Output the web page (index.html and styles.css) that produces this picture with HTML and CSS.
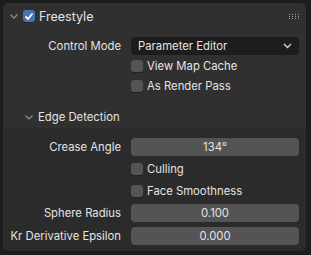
FILE: index.html
```html
<!DOCTYPE html>
<html lang="en">
<head>
    <meta charset="UTF-8">
    <title>Freestyle</title>
    <link rel="stylesheet" href="styles.css">
</head>
<body>
<div class="panel">
  <div class="panel-head">
    <svg class="chev" width="8" height="5" viewBox="0 0 8 5"><path d="M0.5 0.5 L4 4 L7.5 0.5" fill="none" stroke="#8a8a8a" stroke-width="1.3"/></svg>
    <span class="check on"><svg width="10" height="9" viewBox="0 0 10 9"><path d="M1.5 4.5 L4 7 L8.5 1.5" fill="none" stroke="#fff" stroke-width="1.8"/></svg></span>
    <span class="title">Freestyle</span>
    <svg class="grip" width="11" height="5" viewBox="0 0 11 5">
      <g fill="#a0a0a0">
        <rect x="0" y="0" width="1" height="1"/><rect x="3" y="0" width="1" height="1"/><rect x="6" y="0" width="1" height="1"/><rect x="9" y="0" width="1" height="1"/>
        <rect x="0" y="2" width="1" height="1"/><rect x="3" y="2" width="1" height="1"/><rect x="6" y="2" width="1" height="1"/><rect x="9" y="2" width="1" height="1"/>
        <rect x="0" y="4" width="1" height="1"/><rect x="3" y="4" width="1" height="1"/><rect x="6" y="4" width="1" height="1"/><rect x="9" y="4" width="1" height="1"/>
      </g>
    </svg>
  </div>

  <div class="grid first">
    <div class="lbl">Control Mode</div>
    <div class="menu">Parameter Editor
      <svg width="9" height="6" viewBox="0 0 9 6"><path d="M1 1 L4.5 4.5 L8 1" fill="none" stroke="#d0d0d0" stroke-width="1.4"/></svg>
    </div>
    <div></div>
    <div class="opt"><span class="check"></span>View Map Cache</div>
    <div></div>
    <div class="opt"><span class="check"></span>As Render Pass</div>
  </div>

  <div class="sub">
    <div class="sub-head">
      <svg class="chev" width="8" height="5" viewBox="0 0 8 5"><path d="M0.5 0.5 L4 4 L7.5 0.5" fill="none" stroke="#8a8a8a" stroke-width="1.3"/></svg>
      <span>Edge Detection</span>
    </div>
    <div class="grid">
      <div class="lbl">Crease Angle</div>
      <div class="num">134°</div>
      <div></div>
      <div class="opt"><span class="check"></span>Culling</div>
      <div></div>
      <div class="opt"><span class="check"></span>Face Smoothness</div>
      <div class="lbl">Sphere Radius</div>
      <div class="num">0.100</div>
      <div class="lbl">Kr Derivative Epsilon</div>
      <div class="num">0.000</div>
    </div>
  </div>
</div>
</body>
</html>
```

FILE: styles.css
```css
body { margin: 0; background: #1d1d1d; font-family: Inter, "DejaVu Sans", sans-serif; font-size: 11.3px; color: #e4e4e4; }

.panel {
  margin: 3px;
  width: 303px;
  height: 248px;
  background: #303030;
  border-radius: 5px;
  overflow: hidden;
}

.panel-head {
  height: 26px;
  display: flex;
  align-items: center;
  padding-left: 7px;
}
.panel-head .chev { margin-right: 5px; }
.title { font-size: 12.5px; margin-left: 4px; flex: 1; }
.grip { margin-right: 6px; }

.check {
  width: 12px;
  height: 12px;
  border-radius: 3px;
  background: #545454;
  box-shadow: 0 1px 0 #222;
  display: inline-flex;
  align-items: center;
  justify-content: center;
  margin-right: 4px;
}
.check.on { background: #4772b3; margin-right: 0; }

.grid {
  display: grid;
  grid-template-columns: 118px 168px;
  column-gap: 10px;
  align-items: center;
}
.grid.first { margin-top: 7px; grid-auto-rows: 20px; }

.lbl { text-align: right; }

.menu {
  height: 18px;
  background: #1d1d1d;
  border-radius: 4px;
  display: flex;
  align-items: center;
  justify-content: space-between;
  padding: 0 7px;
  box-sizing: border-box;
}

.opt { display: flex; align-items: center; height: 20px; }

.sub { margin-top: 10px; }
.sub-head {
  height: 22px;
  display: flex;
  align-items: center;
  padding-left: 22px;
}
.sub-head .chev { margin-right: 5px; }
.sub .grid {
  background: #2b2b2b;
  padding-top: 9px;
  padding-bottom: 8px;
  grid-template-rows: 20px 23px 21px 24px 21px;
}

.num {
  height: 18px;
  background: #545454;
  border-radius: 4px;
  text-align: center;
  line-height: 18px;
}
```
